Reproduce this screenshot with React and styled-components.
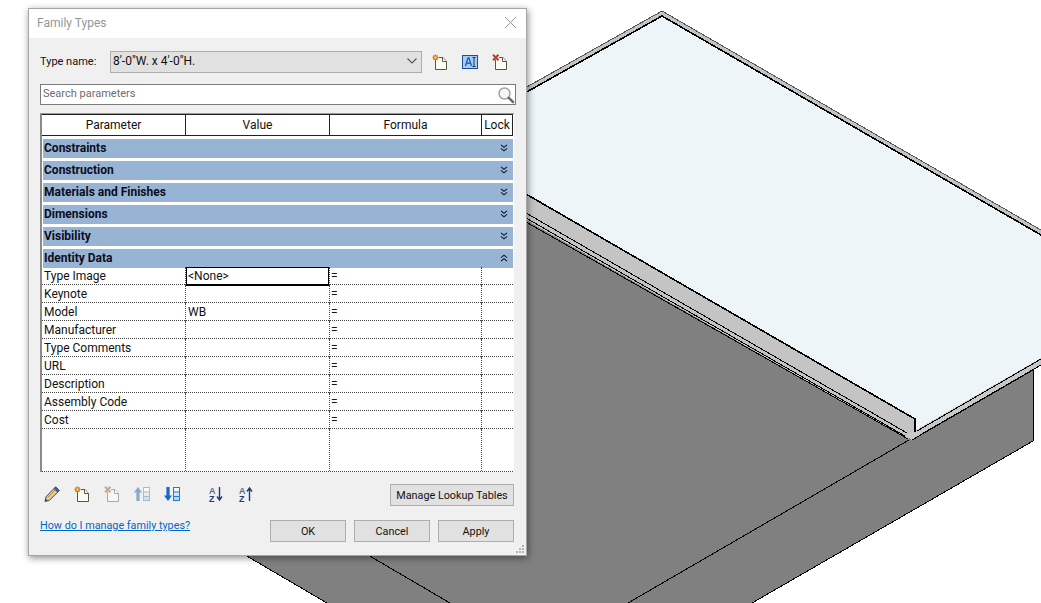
import React from 'react';
import styled, { createGlobalStyle } from 'styled-components';

const GlobalStyle = createGlobalStyle`
    html, body {
        margin: 0;
        padding: 0;
        background: #fff;
    }
    #root {
        width: 1041px;
        height: 603px;
        overflow: hidden;
    }
`;

const Page = styled.div`
    position: relative;
    width: 1041px;
    height: 603px;
    overflow: hidden;
    background: #fff;
    font-family: Roboto, 'Noto Sans', sans-serif;
    font-size: 12px;
    color: #111;
`;

const Scene = styled.svg`
    position: absolute;
    left: 0;
    top: 0;
`;

const Dialog = styled.div`
    position: absolute;
    left: 28px;
    top: 8px;
    width: 499px;
    height: 548px;
    box-sizing: border-box;
    border: 1px solid #a6a6a6;
    background: #f0f0f0;
    box-shadow: 1px 2px 7px rgba(0, 0, 0, 0.45);
    display: flex;
    flex-direction: column;
`;

const TitleBar = styled.div`
    height: 29px;
    flex: none;
    box-sizing: border-box;
    background: #fff;
    display: flex;
    align-items: center;
    justify-content: space-between;
    padding: 0 9px 2px 8px;
    color: #8f9a9a;
`;

const Content = styled.div`
    flex: 1;
    display: flex;
    flex-direction: column;
    padding: 13px 12px 0 11px;
`;

const TypeRow = styled.div`
    display: flex;
    align-items: center;
    height: 22px;
`;

const TypeLabel = styled.label`
    width: 70px;
    flex: none;
    margin-top: -2px;
    font-size: 11px;
`;

const Combo = styled.div`
    width: 312px;
    height: 22px;
    box-sizing: border-box;
    border: 1px solid #adadad;
    background: #e1e1e1;
    display: flex;
    align-items: center;
    justify-content: space-between;
    padding: 0 3px 2px 2px;
`;

const TypeIcons = styled.div`
    display: flex;
    align-items: center;
    margin-left: 10px;
    gap: 14px;
`;

const SearchBox = styled.div`
    margin-top: 11px;
    height: 21px;
    width: 476px;
    box-sizing: border-box;
    border: 1px solid #7a7a7a;
    background: #fff;
    display: flex;
    align-items: center;
    justify-content: space-between;
    padding: 0 0 0 2px;
    color: #6d6d6d;
    font-size: 11px;
`;

const SearchText = styled.span`
    margin-top: -3px;
`;

const Table = styled.div`
    margin-top: 8px;
    width: 474px;
    height: 359px;
    box-sizing: border-box;
    border-top: 1px solid #9a9a9a;
    border-left: 2px solid #8a8a8a;
    background: #fff;
    display: flex;
    flex-direction: column;
`;

const Grid = styled.div`
    display: grid;
    grid-template-columns: 144px 144px 152px 31px;
    width: 471px;
    flex: none;
`;

const HeaderRow = styled(Grid)`
    height: 22px;
    box-sizing: border-box;
    border-top: 1px solid #222;
    border-bottom: 1px solid #222;
    margin-bottom: 3px;
`;

const HeaderCell = styled.div`
    border-right: 1px solid #222;
    display: flex;
    align-items: center;
    justify-content: center;
`;

const Band = styled.div`
    height: 19px;
    box-sizing: border-box;
    margin: 0 1px 3px 1px;
    flex: none;
    background: #98b4d4;
    color: #0c0c1e;
    font-weight: 700;
    display: flex;
    align-items: center;
    justify-content: space-between;
    padding: 0 5px 2px 1px;
`;

const Rows = styled.div`
    margin-top: -4px;
    flex: 1;
    display: flex;
    flex-direction: column;
`;

const Row = styled(Grid)`
    height: 18px;
    box-sizing: border-box;
    border-bottom: 1px dotted #444;
`;

const FillerRow = styled(Grid)`
    flex: 1;
    border-bottom: 1px dotted #444;
`;

const Cell = styled.div`
    border-right: ${(p) => (p.$last ? 'none' : '1px dotted #444')};
    padding: 1px 0 0 ${(p) => p.$pad || 2}px;
    line-height: 17px;
    white-space: nowrap;
    box-shadow: ${(p) => (p.$selected ? 'inset 0 0 0 1px #000, 0 1px 0 #000' : 'none')};
`;

const Toolbar = styled.div`
    margin-top: 12px;
    height: 22px;
    width: 474px;
    display: flex;
    align-items: center;
    justify-content: space-between;
`;

const ToolIcons = styled.div`
    display: flex;
    gap: 14px;
    padding: 0 0 3px 4px;
`;

const SortIcons = styled.div`
    display: flex;
    gap: 14px;
    margin-left: 14px;
`;

const Footer = styled.div`
    margin-top: 14px;
    height: 22px;
    width: 474px;
    display: flex;
    justify-content: space-between;
`;

const HelpLink = styled.a`
    color: #0066cc;
    text-decoration: underline;
    line-height: 12px;
    font-size: 10.8px;
`;

const Buttons = styled.div`
    display: flex;
    gap: 8px;
`;

const Button = styled.button`
    width: ${(p) => p.$width || 76}px;
    height: 22px;
    padding: 0;
    box-sizing: border-box;
    border: 1px solid #adadad;
    background: #e1e1e1;
    color: #111;
    font-family: inherit;
    font-size: 10.8px;
    white-space: nowrap;
`;

const Grip = styled.svg`
    position: absolute;
    right: 1px;
    bottom: 1px;
`;

const NewPage = ({ mark }) => (
    <svg width="16" height="16" viewBox="0 0 16 16" fill="none">
        <path d="M3.5 5.5V15.5H14.5V7.5L11 3.5H7" fill="#fbfbf4" stroke="#5c5646" />
        <path d="M10.5 3.5V7.5H14.5" fill="#fff" stroke="#5c5646" />
        {mark === 'star' && (
            <g stroke="#cf7d12" strokeWidth="1.4">
                <path d="M3.5 0.5V6.5M0.5 3.5H6.5M1.4 1.4L5.6 5.6M5.6 1.4L1.4 5.6" />
                <circle cx="3.5" cy="3.5" r="1.2" fill="#fbd56b" stroke="none" />
            </g>
        )}
        {mark === 'cross' && (
            <path d="M1 0.8L6.5 6.2M6.5 0.8L1 6.2" stroke="#c23b22" strokeWidth="2" />
        )}
    </svg>
);

const DisabledPage = () => (
    <svg width="16" height="16" viewBox="0 0 16 16" fill="none">
        <path d="M3.5 5.5V15.5H14.5V7.5L11 3.5H7" fill="#f6f6f6" stroke="#a9a9a9" />
        <path d="M10.5 3.5V7.5H14.5" fill="#fff" stroke="#a9a9a9" />
        <path d="M1 0.8L6.5 6.2M6.5 0.8L1 6.2" stroke="#c4a98c" strokeWidth="2" />
    </svg>
);

const RenameIcon = () => (
    <svg width="16" height="14" viewBox="0 0 16 14" fill="none">
        <rect x="0.5" y="0.5" width="15" height="13" fill="#a9cdf0" stroke="#1f4e96" />
        <path d="M3.5 11L6 3H7L9.5 11M4.6 8.2H8.4" stroke="#1766c4" strokeWidth="1.4" />
        <path d="M10.5 2.5H13.5M12 2.5V11.5M10.5 11.5H13.5" stroke="#1b3558" />
    </svg>
);

const Magnifier = () => (
    <svg width="18" height="18" viewBox="0 0 18 18" fill="none">
        <circle cx="7.5" cy="7.5" r="5.5" fill="#f4f8fa" stroke="#9aa2a4" strokeWidth="1.4" />
        <path d="M11.8 11.8L16 16" stroke="#6b6f70" strokeWidth="2.6" strokeLinecap="round" />
    </svg>
);

const Pencil = () => (
    <svg width="16" height="16" viewBox="0 0 16 16" fill="none">
        <path d="M1 15.5L2 10.8L11.6 0.8L15.4 4.4L5.4 14.4Z" fill="#ecc88e" stroke="#3e4a5c" />
        <path d="M3.6 11.6L12.2 3" stroke="#b98a4a" />
        <path d="M11.6 0.8L15.4 4.4L13.4 6.4L9.6 2.8Z" fill="#3f5f8f" />
        <path d="M1 15.5L1.6 12.6L3.8 14.8Z" fill="#3e4a5c" />
    </svg>
);

const MoveIcon = ({ up, color, bar }) => (
    <svg width="16" height="16" viewBox="0 0 16 16" fill="none">
        <defs>
            <linearGradient id={up ? 'rowUp' : 'rowDown'} x1="0" y1="0" x2="0" y2="1">
                <stop offset="0" stopColor="#ffffff" />
                <stop offset="1" stopColor={up ? '#c9dfe6' : '#a3d0ea'} />
            </linearGradient>
        </defs>
        <path
            d={up ? 'M4 1L8 6.5H5.6V15H2.4V6.5H0Z' : 'M4 15L8 9.5H5.6V1H2.4V9.5H0Z'}
            fill={color}
        />
        <rect x="9.5" y="1.5" width="6" height="13" fill={`url(#${up ? 'rowUp' : 'rowDown'})`} stroke={bar} />
        <path d="M10 6H15M10 10.5H15" stroke={bar} />
    </svg>
);

const SortIcon = ({ up }) => (
    <svg width="16" height="16" viewBox="0 0 16 16" fill="none">
        <text x="1" y="7.5" fontFamily="Liberation Sans" fontWeight="700" fontSize="9" fill="#5a6a96">
            A
        </text>
        <text x="1" y="15.5" fontFamily="Liberation Sans" fontWeight="700" fontSize="9" fill="#2c3a6a">
            Z
        </text>
        <path
            d={up ? 'M11.5 15V3M9 5.5L11.5 2L14 5.5' : 'M11.5 1V13M9 10.5L11.5 14L14 10.5'}
            stroke="#1f3a78"
            strokeWidth="1.4"
        />
    </svg>
);

const Chevrons = ({ up }) => (
    <svg width="8" height="8" viewBox="0 0 8 8" fill="none" stroke="#10182e" strokeWidth="1.1">
        <g transform={up ? 'rotate(180 4 4)' : undefined}>
            <path d="M1 0.8L4 3.3L7 0.8M1 4.3L4 6.8L7 4.3" />
        </g>
    </svg>
);

const groups = ['Constraints', 'Construction', 'Materials and Finishes', 'Dimensions', 'Visibility'];

const params = [
    ['Type Image', '<None>'],
    ['Keynote', ''],
    ['Model', 'WB'],
    ['Manufacturer', ''],
    ['Type Comments', ''],
    ['URL', ''],
    ['Description', ''],
    ['Assembly Code', ''],
    ['Cost', ''],
];

function ModelScene() {
    return (
        <Scene width="1041" height="603" viewBox="0 0 1041 603" shapeRendering="crispEdges">
            {/* wall faces */}
            <path
                d="M500 205L912 439L1033 370V441L752 603H327L245 555H500Z"
                fill="#808080"
            />
            <path d="M245 555L327 603M368 555L450 603M909 440L628 603M1033 370V441L752 603" stroke="#000" fill="none" />
            {/* eave strips */}
            <path d="M500 179L916 419V432L908 439L500 205Z" fill="#c4c4c4" />
            <path d="M916 430L1041 358V365L1033 370L912 440L906 436Z" fill="#c8c8c8" />
            {/* roof */}
            <path d="M662 11L1041 230V240L662 17L500 108V102Z" fill="#c4c4c4" />
            <path d="M662 16L1041 235V358L916 430V419L500 179V108Z" fill="#edf5f8" />
            <g stroke="#000" fill="none">
                <path d="M500 107L662 16L1041 235" strokeWidth="1.6" />
                <path d="M500 102L662 11L1041 230" stroke="#555" />
                <path d="M500 179L915 419V432" strokeWidth="1.6" />
                <path d="M526 213L907 433M526 218L905 436M526 222L908 439" />
                <path d="M917 431L1041 359M920 435L1041 365M912 440L1033 370" />
            </g>
        </Scene>
    );
}

function App() {
    return (
        <Page>
            <GlobalStyle />
            <ModelScene />
            <Dialog>
                <TitleBar>
                    <span>Family Types</span>
                    <svg width="13" height="13" viewBox="0 0 13 13" stroke="#9a9a9a" fill="none">
                        <path d="M1 1L12 12M12 1L1 12" />
                    </svg>
                </TitleBar>
                <Content>
                    <TypeRow>
                        <TypeLabel>Type name:</TypeLabel>
                        <Combo>
                            <span>8'-0"W. x 4'-0"H.</span>
                            <svg width="12" height="8" viewBox="0 0 12 8" fill="none" stroke="#555" strokeWidth="1.1">
                                <path d="M1.5 1.5L6 6L10.5 1.5" />
                            </svg>
                        </Combo>
                        <TypeIcons>
                            <NewPage mark="star" />
                            <RenameIcon />
                            <NewPage mark="cross" />
                        </TypeIcons>
                    </TypeRow>
                    <SearchBox>
                        <SearchText>Search parameters</SearchText>
                        <Magnifier />
                    </SearchBox>
                    <Table>
                        <HeaderRow>
                            <HeaderCell>Parameter</HeaderCell>
                            <HeaderCell>Value</HeaderCell>
                            <HeaderCell>Formula</HeaderCell>
                            <HeaderCell>Lock</HeaderCell>
                        </HeaderRow>
                        {groups.map((g) => (
                            <Band key={g}>
                                {g}
                                <Chevrons />
                            </Band>
                        ))}
                        <Band>
                            Identity Data
                            <Chevrons up />
                        </Band>
                        <Rows>
                            {params.map(([name, value], i) => (
                                <Row key={name}>
                                    <Cell>{name}</Cell>
                                    <Cell $selected={i === 0}>{value}</Cell>
                                    <Cell $pad={1}>=</Cell>
                                    <Cell $last />
                                </Row>
                            ))}
                            <FillerRow>
                                <Cell />
                                <Cell />
                                <Cell />
                                <Cell $last />
                            </FillerRow>
                        </Rows>
                    </Table>
                    <Toolbar>
                        <ToolIcons>
                            <Pencil />
                            <NewPage mark="star" />
                            <DisabledPage />
                            <MoveIcon up color="#84a9c9" bar="#a8bcc6" />
                            <MoveIcon color="#1569c7" bar="#2b78c8" />
                            <SortIcons>
                                <SortIcon />
                                <SortIcon up />
                            </SortIcons>
                        </ToolIcons>
                        <Button $width={124}>Manage Lookup Tables</Button>
                    </Toolbar>
                    <Footer>
                        <HelpLink href="#">How do I manage family types?</HelpLink>
                        <Buttons>
                            <Button>OK</Button>
                            <Button>Cancel</Button>
                            <Button>Apply</Button>
                        </Buttons>
                    </Footer>
                </Content>
                <Grip width="10" height="10" viewBox="0 0 10 10" fill="#b4b4b4">
                    <rect x="7" y="1" width="2" height="2" />
                    <rect x="4" y="4" width="2" height="2" />
                    <rect x="7" y="4" width="2" height="2" />
                    <rect x="1" y="7" width="2" height="2" />
                    <rect x="4" y="7" width="2" height="2" />
                    <rect x="7" y="7" width="2" height="2" />
                </Grip>
            </Dialog>
        </Page>
    );
}

export default App;
